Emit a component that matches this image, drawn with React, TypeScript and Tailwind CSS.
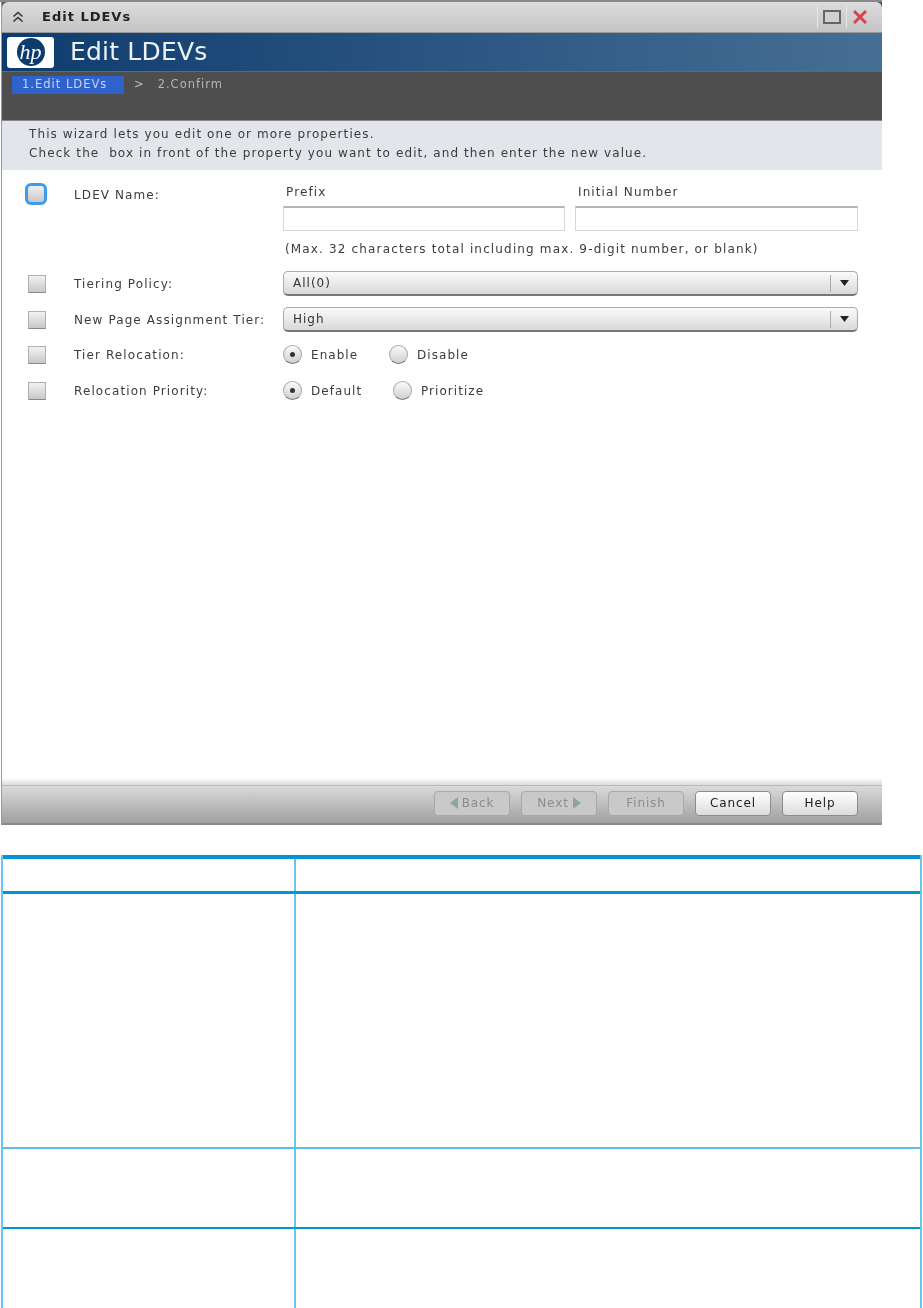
import React from 'react'

const font = "font-['DejaVu_Sans',sans-serif]"

function Check({ focus }: { focus?: boolean }) {
  if (focus) {
    return (
      <div className="w-[22px] h-[22px] ml-[23px] rounded-[6px] border-[3px] border-[#3f9be8] bg-gradient-to-b from-[#f0f0f0] to-[#c8c8c8]" />
    )
  }
  return (
    <div className="w-[18px] h-[18px] ml-[26px] border border-[#b0b0b0] border-b-[#888] bg-gradient-to-b from-[#f2f2f2] to-[#c8c8c8]" />
  )
}

function Radio({ on, label, gap }: { on?: boolean; label: string; gap: string }) {
  return (
    <div className={`flex items-center ${gap}`}>
      <div className="w-[19px] h-[19px] rounded-full border border-[#aaa] border-b-[#777] bg-gradient-to-b from-[#fafafa] to-[#d0d0d0] flex items-center justify-center">
        {on && <div className="w-[5px] h-[5px] rounded-full bg-[#333]" />}
      </div>
      <span className="ml-[9px] text-[12px] tracking-[1.05px] text-[#3c3c3c]">{label}</span>
    </div>
  )
}

function Select({ value }: { value: string }) {
  return (
    <div className="w-[575px] h-[25px] flex items-center rounded-[5px] border border-[#aaa] border-b-2 border-b-[#777] bg-gradient-to-b from-[#fbfbfb] to-[#d9d9d9]">
      <span className="flex-1 pl-[9px] text-[12px] font-medium tracking-[1px] text-[#333]">{value}</span>
      <div className="w-[27px] h-[17px] border-l border-[#aaa] flex items-center justify-center">
        <svg width="9" height="6" viewBox="0 0 9 6">
          <path d="M0 0h9L4.5 6z" fill="#222" />
        </svg>
      </div>
    </div>
  )
}

function Label({ children }: { children: React.ReactNode }) {
  return <div className="w-[209px] ml-[28px] text-[12px] tracking-[1.1px] text-[#3c3c3c] whitespace-nowrap">{children}</div>
}

function WizButton({ label, disabled, left, right }: { label: string; disabled?: boolean; left?: boolean; right?: boolean }) {
  return (
    <div
      className={`w-[76px] h-[25px] flex items-center justify-center gap-[4px] rounded-[4px] border text-[12px] tracking-[0.9px] ${
        disabled
          ? 'border-[#a8a8a8] text-[#8c8c8c] bg-[#c9c9c9]'
          : 'border-[#8c8c8c] text-[#222] bg-gradient-to-b from-[#ffffff] to-[#dcdcdc]'
      }`}
    >
      {left && (
        <svg width="8" height="12" viewBox="0 0 8 12">
          <path d="M8 0v12L0 6z" fill="#8fa3a3" />
        </svg>
      )}
      <span>{label}</span>
      {right && (
        <svg width="8" height="12" viewBox="0 0 8 12">
          <path d="M0 0v12l8-6z" fill="#8fa3a3" />
        </svg>
      )}
    </div>
  )
}

export default function App() {
  return (
    <div className={`w-[923px] h-[1308px] overflow-hidden bg-white ${font}`}>
      <div className="h-[2px] w-[882px] bg-[#8a8a8a]" />

      {/* wizard window */}
      <div className="w-[881px] h-[823px] ml-[1px] flex flex-col border-l border-[#999] blur-[0.5px]">
        <div className="h-[31px] shrink-0 bg-[#555]">
          <div className="h-full flex items-center rounded-t-[6px] border-b border-[#999] bg-gradient-to-b from-[#dcdcdc] to-[#c4c4c4]">
            <svg className="ml-[10px]" width="12" height="12" viewBox="0 0 12 12" fill="none" stroke="#333" strokeWidth="1.6">
              <path d="M1.5 5.5L6 1.5l4.5 4M1.5 10.5L6 6.5l4.5 4" />
            </svg>
            <span className="ml-[18px] text-[13px] font-bold tracking-[1px] text-[#222]">Edit LDEVs</span>
            <div className="ml-auto h-[22px] w-px bg-[#e8e8e8]" />
            <div className="ml-[5px] w-[18px] h-[14px] border-2 border-[#666] bg-[#d0d0d0]" />
            <div className="ml-[5px] h-[22px] w-px bg-[#e8e8e8]" />
            <svg className="ml-[6px] mr-[15px]" width="14" height="14" viewBox="0 0 14 14" fill="none" stroke="#d9434e" strokeWidth="3">
              <path d="M1 1l12 12M13 1L1 13" />
            </svg>
          </div>
        </div>

        <div className="h-[39px] shrink-0 flex items-center border-b border-[#5a6a78] bg-gradient-to-r from-[#0c3c6e] to-[#476f95]">
          <div className="ml-[5px] w-[47px] h-[31px] rounded-[3px] bg-white flex items-center justify-center">
            <div className="w-[28px] h-[28px] rounded-full bg-[#0c3c6e] flex items-center justify-center">
              <span className="text-[22px] italic leading-none text-white font-['Liberation_Serif',serif]">hp</span>
            </div>
          </div>
          <span className="ml-[16px] text-[25px] tracking-[0.2px] text-[#eef2f6]">Edit LDEVs</span>
        </div>

        <div className="h-[49px] shrink-0 border-b border-[#888] bg-[#4e4e4e] pt-[4px]">
          <div className="flex items-center h-[18px] text-[11.5px] tracking-[1px]">
            <div className="ml-[10px] w-[112px] h-[18px] flex items-center pl-[10px] bg-[#2f62cc] text-[#c8d4ea]">1.Edit LDEVs</div>
            <span className="ml-[10px] text-[#bdbdbd]">&gt;</span>
            <span className="ml-[13px] text-[#b5b5b5]">2.Confirm</span>
          </div>
        </div>

        <div className="h-[49px] shrink-0 bg-[#e2e5ea] pt-[4px] pl-[27px] text-[12px] leading-[19px] tracking-[1.1px] text-[#3c3c3c] whitespace-pre">
          <div>This wizard lets you edit one or more properties.</div>
          <div>Check the  box in front of the property you want to edit, and then enter the new value.</div>
        </div>

        <div className="flex-1 bg-white flex flex-col">
          <div className="flex items-start mt-[13px]">
            <Check focus />
            <div className="w-[236px] pl-[27px] pt-[3px] text-[12px] tracking-[1.1px] text-[#3c3c3c]">LDEV Name:</div>
            <div className="flex flex-col">
              <div className="flex text-[12px] tracking-[1.1px] text-[#3c3c3c]">
                <span className="w-[292px] pl-[3px]">Prefix</span>
                <span className="pl-[3px]">Initial Number</span>
              </div>
              <div className="flex gap-[10px] mt-[5px]">
                <div className="w-[282px] h-[25px] border border-[#d8d8d8] border-t-2 border-t-[#b4b4b4]" />
                <div className="w-[283px] h-[25px] border border-[#d8d8d8] border-t-2 border-t-[#b4b4b4]" />
              </div>
              <div className="mt-[9px] pl-[2px] text-[12px] tracking-[1.15px] text-[#3c3c3c] whitespace-nowrap">
                (Max. 32 characters total including max. 9-digit number, or blank)
              </div>
            </div>
          </div>

          <div className="flex items-center mt-[13px] h-[25px]">
            <Check />
            <Label>Tiering Policy:</Label>
            <Select value="All(0)" />
          </div>
          <div className="flex items-center mt-[11px] h-[25px]">
            <Check />
            <Label>New Page Assignment Tier:</Label>
            <Select value="High" />
          </div>
          <div className="flex items-center mt-[10px] h-[25px]">
            <Check />
            <Label>Tier Relocation:</Label>
            <div className="flex items-center">
              <Radio on label="Enable" gap="w-[106px]" />
              <Radio label="Disable" gap="" />
            </div>
          </div>
          <div className="flex items-center mt-[11px] h-[25px]">
            <Check />
            <Label>Relocation Priority:</Label>
            <div className="flex items-center">
              <Radio on label="Default" gap="w-[110px]" />
              <Radio label="Prioritize" gap="" />
            </div>
          </div>
        </div>

        <div className="h-[8px] shrink-0 bg-gradient-to-b from-[#ffffff] to-[#dcdcdc] border-b border-[#b8b8b8]" />
        <div className="h-[39px] shrink-0 flex items-center justify-end gap-[11px] pr-[24px] pb-[3px] border-b-2 border-[#8a8a8a] bg-gradient-to-b from-[#dadada] to-[#a0a0a0]">
          <WizButton label="Back" disabled left />
          <WizButton label="Next" disabled right />
          <WizButton label="Finish" disabled />
          <WizButton label="Cancel" />
          <WizButton label="Help" />
        </div>
      </div>

      {/* table below the screenshot */}
      <div className="mt-[30px] ml-[1px] w-[921px] border-x-2 border-[#6cc4ec]">
        <div className="h-[39px] grid grid-cols-[293px_1fr] border-t-[4px] border-b-[3px] border-t-[#0096d6] border-b-[#0096d6]">
          <div className="border-r-2 border-[#6cc4ec]" />
          <div />
        </div>
        <div className="h-[255px] grid grid-cols-[293px_1fr] border-b-2 border-[#5cbdea]">
          <div className="border-r-2 border-[#6cc4ec]" />
          <div />
        </div>
        <div className="h-[80px] grid grid-cols-[293px_1fr] border-b-2 border-[#0096d6]">
          <div className="border-r-2 border-[#6cc4ec]" />
          <div />
        </div>
        <div className="h-[80px] grid grid-cols-[293px_1fr]">
          <div className="border-r-2 border-[#6cc4ec]" />
          <div />
        </div>
      </div>
    </div>
  )
}
